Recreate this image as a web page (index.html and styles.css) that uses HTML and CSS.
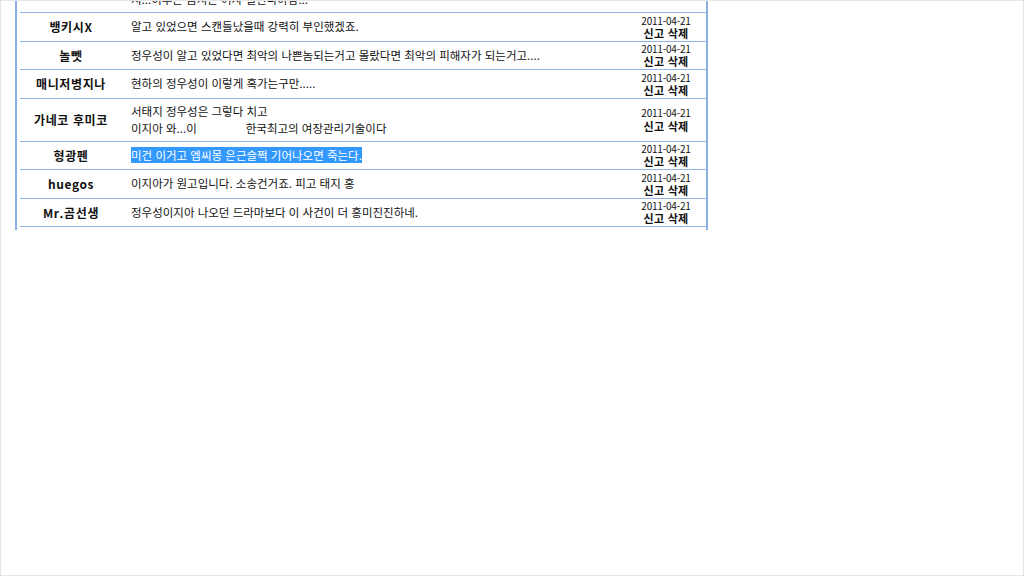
FILE: index.html
```html
<!DOCTYPE html>
<html lang="ko">
<head>
<meta charset="utf-8">
<link rel="stylesheet" href="styles.css">
</head>
<body>
<div class="page">
  <div class="frame">
    <div class="list">
      <div class="row lead">
        <div class="name">&nbsp;</div>
        <div class="text">&nbsp;<br>&nbsp;<br>지...이후는 음지는 여자 열린다야함...</div>
        <div class="date"><span class="d">2011-04-21</span><br><span class="act">신고 삭제</span></div>
      </div>
      <div class="row">
        <div class="name">뱅키시X</div>
        <div class="text">알고 있었으면 스캔들났을때 강력히 부인했겠죠.</div>
        <div class="date"><span class="d">2011-04-21</span><br><span class="act">신고 삭제</span></div>
      </div>
      <div class="row">
        <div class="name">놀뻿</div>
        <div class="text">정우성이 알고 있었다면 최악의 나쁜놈되는거고 몰랐다면 최악의 피해자가 되는거고....</div>
        <div class="date"><span class="d">2011-04-21</span><br><span class="act">신고 삭제</span></div>
      </div>
      <div class="row">
        <div class="name">매니저병지나</div>
        <div class="text">현하의 정우성이 이렇게 혹가는구만.....</div>
        <div class="date"><span class="d">2011-04-21</span><br><span class="act">신고 삭제</span></div>
      </div>
      <div class="row">
        <div class="name">가네코 후미코</div>
        <div class="text">서태지 정우성은 그렇다 치고<br>이지아 와...이<span class="gap"></span>한국최고의 여장관리기술이다</div>
        <div class="date"><span class="d">2011-04-21</span><br><span class="act">신고 삭제</span></div>
      </div>
      <div class="row">
        <div class="name">형광펜</div>
        <div class="text"><span class="sel">미건 이거고 엠씨몽 은근슬쩍 기어나오면 죽는다.</span></div>
        <div class="date"><span class="d">2011-04-21</span><br><span class="act">신고 삭제</span></div>
      </div>
      <div class="row">
        <div class="name">huegos</div>
        <div class="text">이지아가 원고입니다. 소송건거죠. 피고 태지 홍</div>
        <div class="date"><span class="d">2011-04-21</span><br><span class="act">신고 삭제</span></div>
      </div>
      <div class="row">
        <div class="name">Mr.곰선생</div>
        <div class="text">정우성이지아 나오던 드라마보다 이 사건이 더 흥미진진하네.</div>
        <div class="date"><span class="d">2011-04-21</span><br><span class="act">신고 삭제</span></div>
      </div>
      <div class="row">
        <div class="name">&nbsp;</div>
        <div class="text">&nbsp;</div>
        <div class="date"><span class="d">2011-04-21</span><br><span class="act">신고 삭제</span></div>
      </div>
    </div>
  </div>
</div>
</body>
</html>
```
FILE: styles.css
```css
html, body {
  margin: 0;
  padding: 0;
  background: #ffffff;
}

.page {
  box-sizing: border-box;
  width: 1024px;
  height: 576px;
  border: 1px solid #e6e6e6;
  overflow: hidden;
}

.frame {
  box-sizing: border-box;
  width: 693px;
  height: 230px;
  margin: -1px 0 0 14px;
  border-left: 2px solid #8aaee6;
  border-right: 2px solid #8aaee6;
  padding-left: 3px;
  overflow: hidden;
  background: #ffffff;
}

.list {
  width: 686px;
  margin-top: -47px;
  font-family: "Noto Sans CJK KR", "Liberation Sans", sans-serif;
  font-size: 11.5px;
  color: #111111;
}

.row {
  display: grid;
  grid-template-columns: 102px 1fr 80px;
  align-items: center;
  border-bottom: 1px solid #8fb3ea;
}

.name {
  text-align: center;
  font-weight: bold;
  font-size: 12px;
  letter-spacing: 0.6px;
}

.text {
  padding: 4px 0 4px 9px;
  line-height: 17px;
  white-space: nowrap;
}

.date {
  text-align: center;
  font-size: 11px;
  line-height: 13.25px;
  padding: 0.5px 0;
}

.d {
  font-size: 10px;
  letter-spacing: -0.2px;
}

.act {
  font-weight: bold;
  letter-spacing: 0.3px;
}

.gap {
  display: inline-block;
  width: 49px;
}

.sel {
  background: #3399ff;
  color: #ffffff;
}
```
